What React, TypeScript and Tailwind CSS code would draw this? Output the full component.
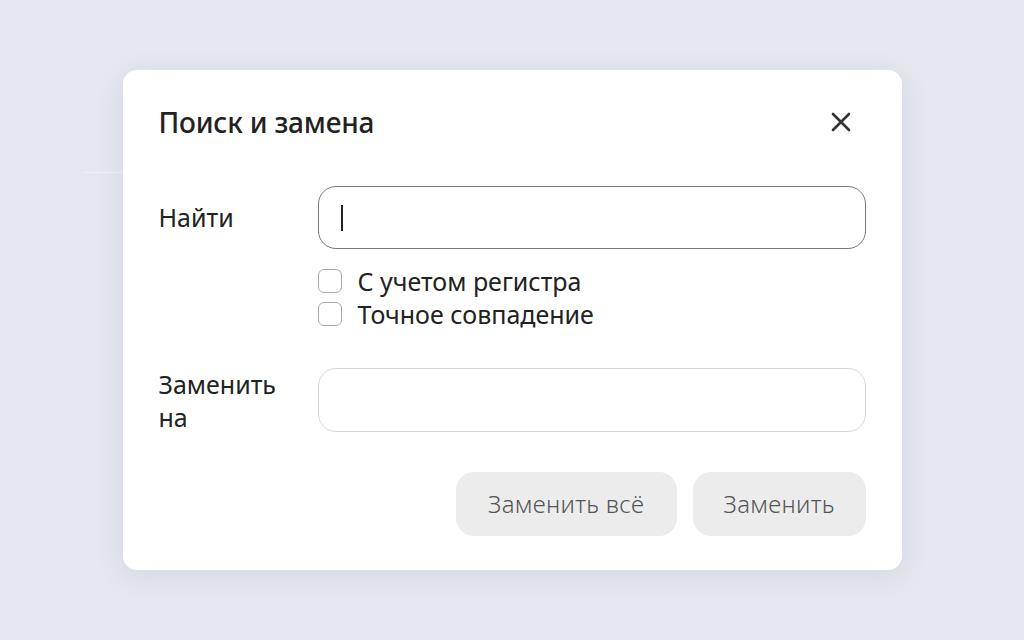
import React from "react";

export default function App() {
  return (
    <div
      className="relative w-[1024px] h-[640px] bg-[#e4e7ee] flex items-center justify-center overflow-hidden"
      style={{ fontFamily: '"Noto Sans", "Open Sans", sans-serif' }}
    >
      <div className="absolute left-[84px] top-[172px] w-[40px] h-px bg-[#eef0f5]" />
      <div className="relative w-[779px] h-[500px] bg-white rounded-[14px] shadow-[0_6px_30px_rgba(40,50,80,0.08)] px-[36px] pt-[34px] flex flex-col">
        <div className="flex items-center justify-between h-[36px]">
          <h1 className="text-[28px] font-medium text-[#222] leading-none tracking-[-0.2px]">Поиск и замена</h1>
          <button className="w-[30px] h-[30px] flex items-center justify-center mr-[10px]">
            <svg width="20" height="20" viewBox="0 0 20 20" fill="none">
              <path d="M2 2L18 18M18 2L2 18" stroke="#333" strokeWidth="2.6" strokeLinecap="round" />
            </svg>
          </button>
        </div>

        <div className="flex items-center mt-[46px]">
          <div className="w-[159px] text-[25px] text-[#222] leading-none">Найти</div>
          <div className="flex-1 h-[63px] rounded-[18px] border border-[#777] flex items-center px-[22px]">
            <div className="w-[2px] h-[26px] bg-[#222]" />
          </div>
        </div>

        <div className="ml-[159px] mt-[20px] flex flex-col gap-[9px]">
          <label className="flex items-center gap-[16px] h-[24px]">
            <span className="w-[24px] h-[24px] rounded-[6px] border border-[#aaa] bg-white" />
            <span className="text-[25px] text-[#222] leading-none">С учетом регистра</span>
          </label>
          <label className="flex items-center gap-[16px] h-[24px]">
            <span className="w-[24px] h-[24px] rounded-[6px] border border-[#aaa] bg-white" />
            <span className="text-[25px] text-[#222] leading-none">Точное совпадение</span>
          </label>
        </div>

        <div className="flex items-start mt-[42px]">
          <div className="w-[159px] text-[25px] text-[#222] leading-[33px]">
            <div className="w-[125px]">Заменить на</div>
          </div>
          <div className="flex-1 h-[64px] rounded-[18px] border border-[#d6d6d6]" />
        </div>

        <div className="flex justify-end gap-[16px] mt-[38px]">
          <button className="w-[221px] h-[64px] rounded-[18px] bg-[#ececec] text-[24px] text-[#555] font-light tracking-[0.3px]">
            Заменить всё
          </button>
          <button className="w-[173px] h-[64px] rounded-[18px] bg-[#ececec] text-[24px] text-[#555] font-light tracking-[0.3px]">
            Заменить
          </button>
        </div>
      </div>
    </div>
  );
}
